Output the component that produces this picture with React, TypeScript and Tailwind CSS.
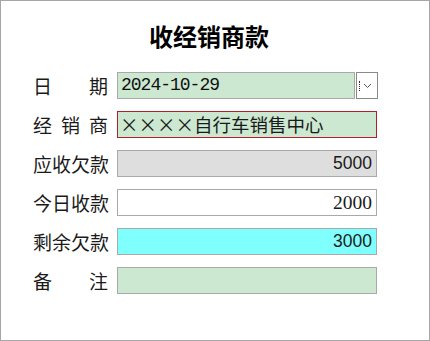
import React from "react";

const cjk = { fontFamily: '"Noto Sans CJK SC", "Noto Sans", sans-serif' };

function Label({ chars }: { chars: string[] }) {
  return (
    <div
      className="flex w-[75px] shrink-0 justify-between text-[19px] leading-none text-[#1a1a1a]"
      style={cjk}
    >
      {chars.map((c, i) => (
        <span key={i}>{c}</span>
      ))}
    </div>
  );
}

export default function App() {
  return (
    <div className="flex h-[341px] w-[430px] flex-col border border-[#a6a6a6] bg-white">
      <div
        className="mt-[19px] flex h-[32px] items-center justify-center pr-[12px] text-[24px] font-bold leading-none text-black"
        style={cjk}
      >
        收经销商款
      </div>
      <div className="mt-[20px] flex flex-col gap-[12px] pl-[32px]">
        {/* 日期 */}
        <div className="flex h-[27px] items-center gap-[9px]">
          <Label chars={["日", "期"]} />
          <div className="flex h-[27px] items-stretch">
            <div
              className="flex w-[238px] items-center border border-[#a9a9a9] bg-[#cce8d0] pl-[3px] text-[18px] tracking-[-1px] text-[#111]"
              style={{ fontFamily: '"Liberation Mono", monospace' }}
            >
              2024-10-29
            </div>
            <div className="relative ml-[1px] flex w-[22px] items-center justify-center border border-[#8a8a8a] bg-white">
              <div className="absolute left-[2px] top-[8px] h-[10px] border-l border-dotted border-[#5a1a1a]" />
              <svg width="9" height="6" viewBox="0 0 9 6">
                <path d="M1 1 L4.5 4.5 L8 1" fill="none" stroke="#555" strokeWidth="1" />
              </svg>
            </div>
          </div>
        </div>
        {/* 经销商 */}
        <div className="flex h-[27px] items-center gap-[9px]">
          <Label chars={["经", "销", "商"]} />
          <div
            className="flex h-[27px] w-[260px] items-center overflow-hidden whitespace-nowrap border border-[#b0202a] bg-[#cce8d0] pl-[2px] text-[18.5px] leading-none text-[#1a1a1a]"
            style={cjk}
          >
            ××××自行车销售中心
          </div>
        </div>
        {/* 应收欠款 */}
        <div className="flex h-[27px] items-center gap-[9px]">
          <Label chars={["应", "收", "欠", "款"]} />
          <div
            className="flex h-[27px] w-[260px] items-center justify-end border border-[#a9a9a9] bg-[#dedede] pr-[4px] text-[17.5px] text-[#1a1a1a]"
            style={{ fontFamily: '"Liberation Sans", Arial, sans-serif' }}
          >
            5000
          </div>
        </div>
        {/* 今日收款 */}
        <div className="flex h-[27px] items-center gap-[9px]">
          <Label chars={["今", "日", "收", "款"]} />
          <div
            className="flex h-[27px] w-[260px] items-center justify-end border border-[#a9a9a9] bg-white pr-[4px] text-[19.5px] text-[#1a1a1a]"
            style={{ fontFamily: '"Liberation Serif", "Times New Roman", serif' }}
          >
            2000
          </div>
        </div>
        {/* 剩余欠款 */}
        <div className="flex h-[27px] items-center gap-[9px]">
          <Label chars={["剩", "余", "欠", "款"]} />
          <div
            className="flex h-[27px] w-[260px] items-center justify-end border border-[#a9a9a9] bg-[#80ffff] pr-[4px] text-[17.5px] text-[#1a1a1a]"
            style={{ fontFamily: '"Liberation Sans", Arial, sans-serif' }}
          >
            3000
          </div>
        </div>
        {/* 备注 */}
        <div className="flex h-[27px] items-center gap-[9px]">
          <Label chars={["备", "注"]} />
          <div className="h-[27px] w-[260px] border border-[#a9a9a9] bg-[#cce8d0]" />
        </div>
      </div>
    </div>
  );
}
